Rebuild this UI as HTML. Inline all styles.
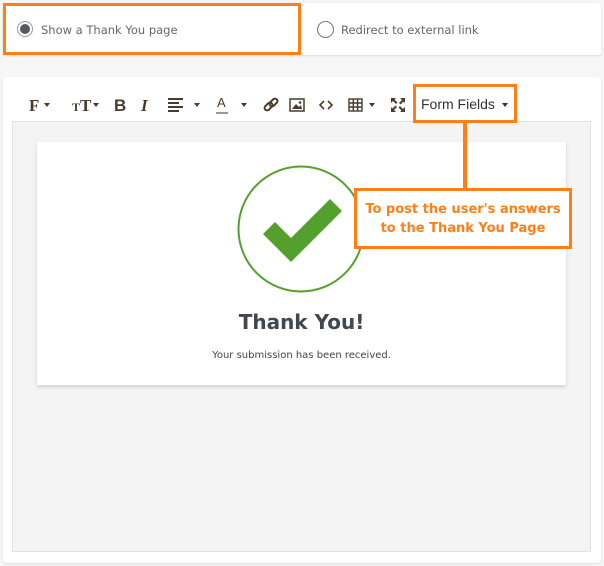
<!DOCTYPE html>
<html><head><style>
body{margin:0;width:604px;height:566px;background:#f6f6f6;font-family:"DejaVu Sans","Liberation Sans",sans-serif;position:relative;overflow:hidden}
.a{position:absolute}
.t{color:#666;font-size:12px}
.ic{position:absolute;top:96px;color:#4a3b2c;font-weight:bold;font-family:"Liberation Serif",serif;font-size:17px}
.car{position:absolute;top:103px;width:0;height:0;border-left:3.5px solid transparent;border-right:3.5px solid transparent;border-top:4px solid #4a3b2c}
</style></head><body>
<div class="a" style="left:3px;top:3px;width:598px;height:52px;background:#fff;border-radius:3px;box-shadow:0 1px 2px #ddd"></div>
<div class="a" style="left:3px;top:3px;width:292px;height:46px;border:3px solid #ff7f17"></div>
<div class="a" style="left:17px;top:21px;width:14px;height:14px;border-radius:50%;border:1px solid #999;background:#fff"></div>
<div class="a" style="left:20px;top:24px;width:10px;height:10px;border-radius:50%;background:#555a62"></div>
<div class="a t" style="left:41px;top:23px;font-size:11.5px">Show a Thank You page</div>
<div class="a" style="left:317px;top:21px;width:15px;height:15px;border-radius:50%;border:1px solid #777;background:#fff"></div>
<div class="a t" style="left:341px;top:23px;font-size:11.5px">Redirect to external link</div>

<div class="a" style="left:3px;top:77px;width:598px;height:486px;background:#fff;border-radius:4px;box-shadow:0 1px 2px #ddd"></div>
<div class="a" style="left:12px;top:121px;width:579px;height:431px;background:#f4f4f4;border:1px solid #e2e2e2;box-sizing:border-box"></div>

<div class="ic" style="left:29px">F</div><div class="car" style="left:44px"></div>
<div class="ic" style="left:72px"><span style="font-size:12px">T</span>T</div><div class="car" style="left:93px"></div>
<div class="ic" style="left:114px;font-family:'Liberation Sans',sans-serif">B</div>
<div class="ic" style="left:141px;font-style:italic">I</div>
<div class="a" style="left:168px;top:98px;width:15px">
<div style="height:2px;background:#4a3b2c;margin-bottom:2px"></div><div style="height:2px;width:11px;background:#4a3b2c;margin-bottom:2px"></div><div style="height:2px;background:#4a3b2c;margin-bottom:2px"></div><div style="height:2px;width:11px;background:#4a3b2c"></div></div>
<div class="car" style="left:194px"></div>
<div class="a" style="left:217px;top:95px;font-size:13px;color:#4a3b2c;font-family:'Liberation Sans',sans-serif">A</div>
<div class="a" style="left:216px;top:112px;width:12px;height:2px;background:#999"></div>
<div class="car" style="left:241px"></div>
<svg class="a" style="left:262px;top:96px" width="18" height="18" viewBox="0 0 18 18" fill="none" stroke="#4a3b2c" stroke-width="2"><rect x="2" y="8" width="9" height="5" rx="2.5" transform="rotate(-45 6.5 10.5)"/><rect x="7" y="4" width="9" height="5" rx="2.5" transform="rotate(-45 11.5 6.5)"/></svg>
<svg class="a" style="left:289px;top:98px" width="16" height="14"><rect x="1" y="1" width="14" height="12" fill="none" stroke="#4a3b2c" stroke-width="1.5"/><path d="M3 11 L7 6 L10 9 L12 7 L13 11Z" fill="#4a3b2c"/><circle cx="11" cy="4.5" r="1.3" fill="#4a3b2c"/></svg>
<svg class="a" style="left:319px;top:99px" width="14" height="12" fill="none" stroke="#4a3b2c" stroke-width="1.6"><path d="M5 2L1 6L5 10M9 2L13 6L9 10"/></svg>
<svg class="a" style="left:348px;top:98px" width="15" height="14" fill="none" stroke="#4a3b2c" stroke-width="1.4"><rect x="1" y="1" width="13" height="12"/><path d="M1 5H14M1 9H14M5.3 1V13M9.6 1V13"/></svg>
<div class="car" style="left:369px"></div>
<svg class="a" style="left:390px;top:97px" width="16" height="16" fill="#4a3b2c"><path d="M1 1h5l-1.5 1.5 3 3-1.5 1.5-3-3L1 6zM15 1v5l-1.5-1.5-3 3-1.5-1.5 3-3L10 1zM1 15v-5l1.5 1.5 3-3 1.5 1.5-3 3L6 15zM15 15h-5l1.5-1.5-3-3 1.5-1.5 3 3L15 10z"/></svg>
<div class="a" style="left:413px;top:84px;width:98px;height:33px;border:3px solid #ff7f17"></div>
<div class="a" style="left:421px;top:96px;font-size:14px;color:#333;font-family:'Liberation Sans',sans-serif">Form Fields</div>
<div class="car" style="left:502px;top:103px;border-top-color:#333"></div>

<div class="a" style="left:37px;top:142px;width:529px;height:243px;background:#fff;box-shadow:0 2px 4px rgba(0,0,0,.15)"></div>
<svg class="a" style="left:237px;top:165px" width="130" height="130"><circle cx="64" cy="64" r="62.5" fill="none" stroke="#55a030" stroke-width="2"/><path d="M26 69 L38 57 L54 73 L93 34 L105 46 L54 97Z" fill="#53a02d"/></svg>
<div class="a" style="left:37px;top:310px;width:529px;text-align:center;font-size:20px;font-weight:bold;color:#41464f">Thank You!</div>
<div class="a" style="left:37px;top:350px;width:529px;text-align:center;font-size:10px;color:#444">Your submission has been received.</div>

<div class="a" style="left:463px;top:120px;width:4px;height:69px;background:#ff7f17"></div>
<div class="a" style="left:354px;top:188px;width:212px;height:55px;border:3px solid #ff7f17;background:#fff;text-align:center;color:#ff7f17;font-weight:bold;font-size:13px;line-height:19px"><div style="padding-top:9px">To post the user's answers<br>to the Thank You Page</div></div>
</body></html>
